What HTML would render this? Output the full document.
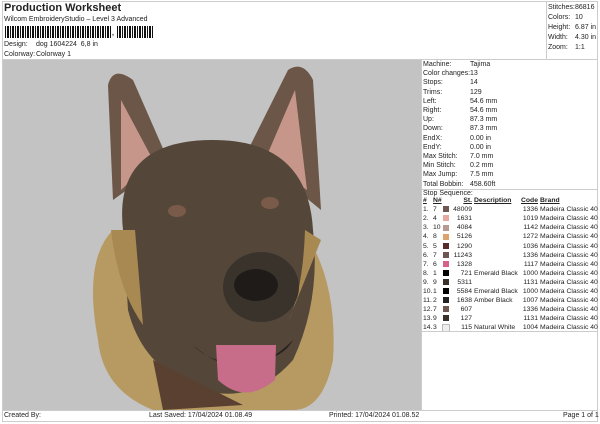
<!DOCTYPE html>
<html><head><style>
body{margin:0;width:600px;height:424px;background:#fff;font-family:"Liberation Sans",sans-serif;color:#222;position:relative;overflow:hidden}
.a{position:absolute;font-size:7px;white-space:nowrap}
.ln{position:absolute;background:#ccc}
table{border-collapse:collapse;table-layout:fixed}
td{font-size:6.8px;padding:0;height:9.1px;white-space:nowrap;overflow:visible}
.sw{display:inline-block;width:6px;height:6px;vertical-align:middle}
</style></head><body>
<div class="a" style="left:4px;top:2px;font-size:11px;font-weight:bold">Production Worksheet</div>
<div class="a" style="left:4px;top:16px">Wilcom EmbroideryStudio – Level 3 Advanced</div>
<div style="position:absolute;left:5px;top:26px;width:106px;height:12px;background:repeating-linear-gradient(90deg,#111 0 1px,#fff 1px 2px,#111 2px 4px,#fff 4px 5px)"></div>
<div class="a" style="left:112px;top:30px;font-weight:bold">,</div>
<div style="position:absolute;left:117px;top:26px;width:36px;height:12px;background:repeating-linear-gradient(90deg,#111 0 1px,#fff 1px 2px,#111 2px 4px,#fff 4px 5px)"></div>
<div class="a" style="left:4px;top:41px">Design:</div><div class="a" style="left:36px;top:41px">dog 1604224 &nbsp;6,8 in</div>
<div class="a" style="left:4px;top:51px">Colorway:</div><div class="a" style="left:36px;top:51px">Colorway 1</div>
<div class="ln" style="left:2px;top:1px;width:596px;height:1px"></div>
<div class="ln" style="left:2px;top:59px;width:596px;height:1px"></div>
<div class="ln" style="left:2px;top:1px;width:1px;height:421px"></div>
<div class="ln" style="left:597px;top:1px;width:1px;height:421px"></div>
<div class="ln" style="left:546px;top:1px;width:1px;height:58px"></div>
<div class="ln" style="left:2px;top:410px;width:596px;height:1px"></div>
<div class="ln" style="left:2px;top:421px;width:596px;height:1px"></div>
<div class="a" style="left:548px;top:3px;line-height:10px">Stitches:<br>Colors:<br>Height:<br>Width:<br>Zoom:</div>
<div class="a" style="left:575px;top:3px;line-height:10px">86816<br>10<br>6.87 in<br>4.30 in<br>1:1</div>
<div style="position:absolute;left:3px;top:60px;width:418px;height:350px;background:#c3c3c3"></div>
<svg style="position:absolute;left:3px;top:60px" width="418" height="350">
<path d="M95,280 Q80,200 110,170 L300,170 Q335,220 330,300 Q320,350 290,350 L150,350 Q100,330 95,280Z" fill="#b79a62"/>
<path d="M110,140 L105,25 Q110,5 130,20 L165,100 Z" fill="#6b5648"/>
<path d="M118,130 L118,40 L150,100Z" fill="#c7968a"/>
<path d="M245,90 L285,10 Q300,0 310,20 L318,150 Z" fill="#6b5648"/>
<path d="M262,100 L292,30 L304,130Z" fill="#c7968a"/>
<path d="M120,170 Q110,80 210,80 Q305,80 310,170 Q318,240 290,300 Q250,345 200,330 Q140,310 125,250Z" fill="#54473a"/>
<path d="M108,170 Q115,230 140,265 L132,170Z M302,170 Q300,230 285,262 L318,180Z" fill="#a98952"/>
<ellipse cx="258" cy="227" rx="38" ry="35" fill="#3a332c"/>
<ellipse cx="253" cy="225" rx="22" ry="16" fill="#1e1b19"/>
<ellipse cx="174" cy="151" rx="9" ry="6" fill="#7a5a48"/>
<ellipse cx="267" cy="143" rx="9" ry="6" fill="#7a5a48"/>
<path d="M190,285 Q240,330 290,280 Q280,300 240,305 Q205,302 190,285Z" fill="#2a2420"/>
<path d="M213,285 L273,285 L272,320 Q242,345 215,320Z" fill="#c76d8a"/>
<path d="M150,300 L240,345 L160,350Z" fill="#5a4030"/>
</svg>
<div class="ln" style="left:421px;top:59px;width:1px;height:351px"></div>
<div class="a" style="left:423px;top:60px;line-height:9.2px">Machine:<br>Color changes:<br>Stops:<br>Trims:<br>Left:<br>Right:<br>Up:<br>Down:<br>EndX:<br>EndY:<br>Max Stitch:<br>Min Stitch:<br>Max Jump:<br>Total Bobbin:</div>
<div class="a" style="left:470px;top:60px;line-height:9.2px">Tajima<br>13<br>14<br>129<br>54.6 mm<br>54.6 mm<br>87.3 mm<br>87.3 mm<br>0.00 in<br>0.00 in<br>7.0 mm<br>0.2 mm<br>7.5 mm<br>458.60ft</div>
<div class="ln" style="left:421px;top:189px;width:177px;height:1px"></div>
<div class="a" style="left:423px;top:190px">Stop Sequence:</div>
<table style="position:absolute;left:423px;top:196px;width:174px">
<col style="width:10px"><col style="width:10px"><col style="width:10px"><col style="width:19px"><col style="width:48px"><col style="width:18px"><col style="width:59px">
<tr style="font-weight:bold;text-decoration:underline"><td>#</td><td>N#</td><td></td><td style="text-align:right">St.</td><td style="padding-left:2px">Description</td><td style="text-align:right">Code</td><td style="padding-left:2px">Brand</td></tr>
<tr><td>1.</td><td>7</td><td><i class="sw" style="background:#6e5750"></i></td><td align=right>48009</td><td></td><td align=right>1336</td><td style="padding-left:2px">Madeira Classic 40</td></tr>
<tr><td>2.</td><td>4</td><td><i class="sw" style="background:#e8a8a0"></i></td><td align=right>1631</td><td></td><td align=right>1019</td><td style="padding-left:2px">Madeira Classic 40</td></tr>
<tr><td>3.</td><td>10</td><td><i class="sw" style="background:#b89b90"></i></td><td align=right>4084</td><td></td><td align=right>1142</td><td style="padding-left:2px">Madeira Classic 40</td></tr>
<tr><td>4.</td><td>8</td><td><i class="sw" style="background:#dca36a"></i></td><td align=right>5126</td><td></td><td align=right>1272</td><td style="padding-left:2px">Madeira Classic 40</td></tr>
<tr><td>5.</td><td>5</td><td><i class="sw" style="background:#5a2a2a"></i></td><td align=right>1290</td><td></td><td align=right>1036</td><td style="padding-left:2px">Madeira Classic 40</td></tr>
<tr><td>6.</td><td>7</td><td><i class="sw" style="background:#6e5750"></i></td><td align=right>11243</td><td></td><td align=right>1336</td><td style="padding-left:2px">Madeira Classic 40</td></tr>
<tr><td>7.</td><td>6</td><td><i class="sw" style="background:#d8608a"></i></td><td align=right>1328</td><td></td><td align=right>1117</td><td style="padding-left:2px">Madeira Classic 40</td></tr>
<tr><td>8.</td><td>1</td><td><i class="sw" style="background:#000"></i></td><td align=right>721</td><td style="padding-left:2px">Emerald Black</td><td align=right>1000</td><td style="padding-left:2px">Madeira Classic 40</td></tr>
<tr><td>9.</td><td>9</td><td><i class="sw" style="background:#3a302a"></i></td><td align=right>5311</td><td></td><td align=right>1131</td><td style="padding-left:2px">Madeira Classic 40</td></tr>
<tr><td>10.</td><td>1</td><td><i class="sw" style="background:#000"></i></td><td align=right>5584</td><td style="padding-left:2px">Emerald Black</td><td align=right>1000</td><td style="padding-left:2px">Madeira Classic 40</td></tr>
<tr><td>11.</td><td>2</td><td><i class="sw" style="background:#222"></i></td><td align=right>1638</td><td style="padding-left:2px">Amber Black</td><td align=right>1007</td><td style="padding-left:2px">Madeira Classic 40</td></tr>
<tr><td>12.</td><td>7</td><td><i class="sw" style="background:#6e5750"></i></td><td align=right>607</td><td></td><td align=right>1336</td><td style="padding-left:2px">Madeira Classic 40</td></tr>
<tr><td>13.</td><td>9</td><td><i class="sw" style="background:#3a302a"></i></td><td align=right>127</td><td></td><td align=right>1131</td><td style="padding-left:2px">Madeira Classic 40</td></tr>
<tr><td>14.</td><td>3</td><td><i class="sw" style="background:#eee;outline:1px solid #bbb"></i></td><td align=right>115</td><td style="padding-left:2px">Natural White</td><td align=right>1004</td><td style="padding-left:2px">Madeira Classic 40</td></tr>
</table>
<div class="ln" style="left:421px;top:331px;width:177px;height:1px"></div>
<div class="a" style="left:4px;top:412px">Created By:</div>
<div class="a" style="left:149px;top:412px">Last Saved: 17/04/2024 01.08.49</div>
<div class="a" style="left:329px;top:412px">Printed: 17/04/2024 01.08.52</div>
<div class="a" style="left:563px;top:412px">Page 1 of 1</div>
</body></html>
